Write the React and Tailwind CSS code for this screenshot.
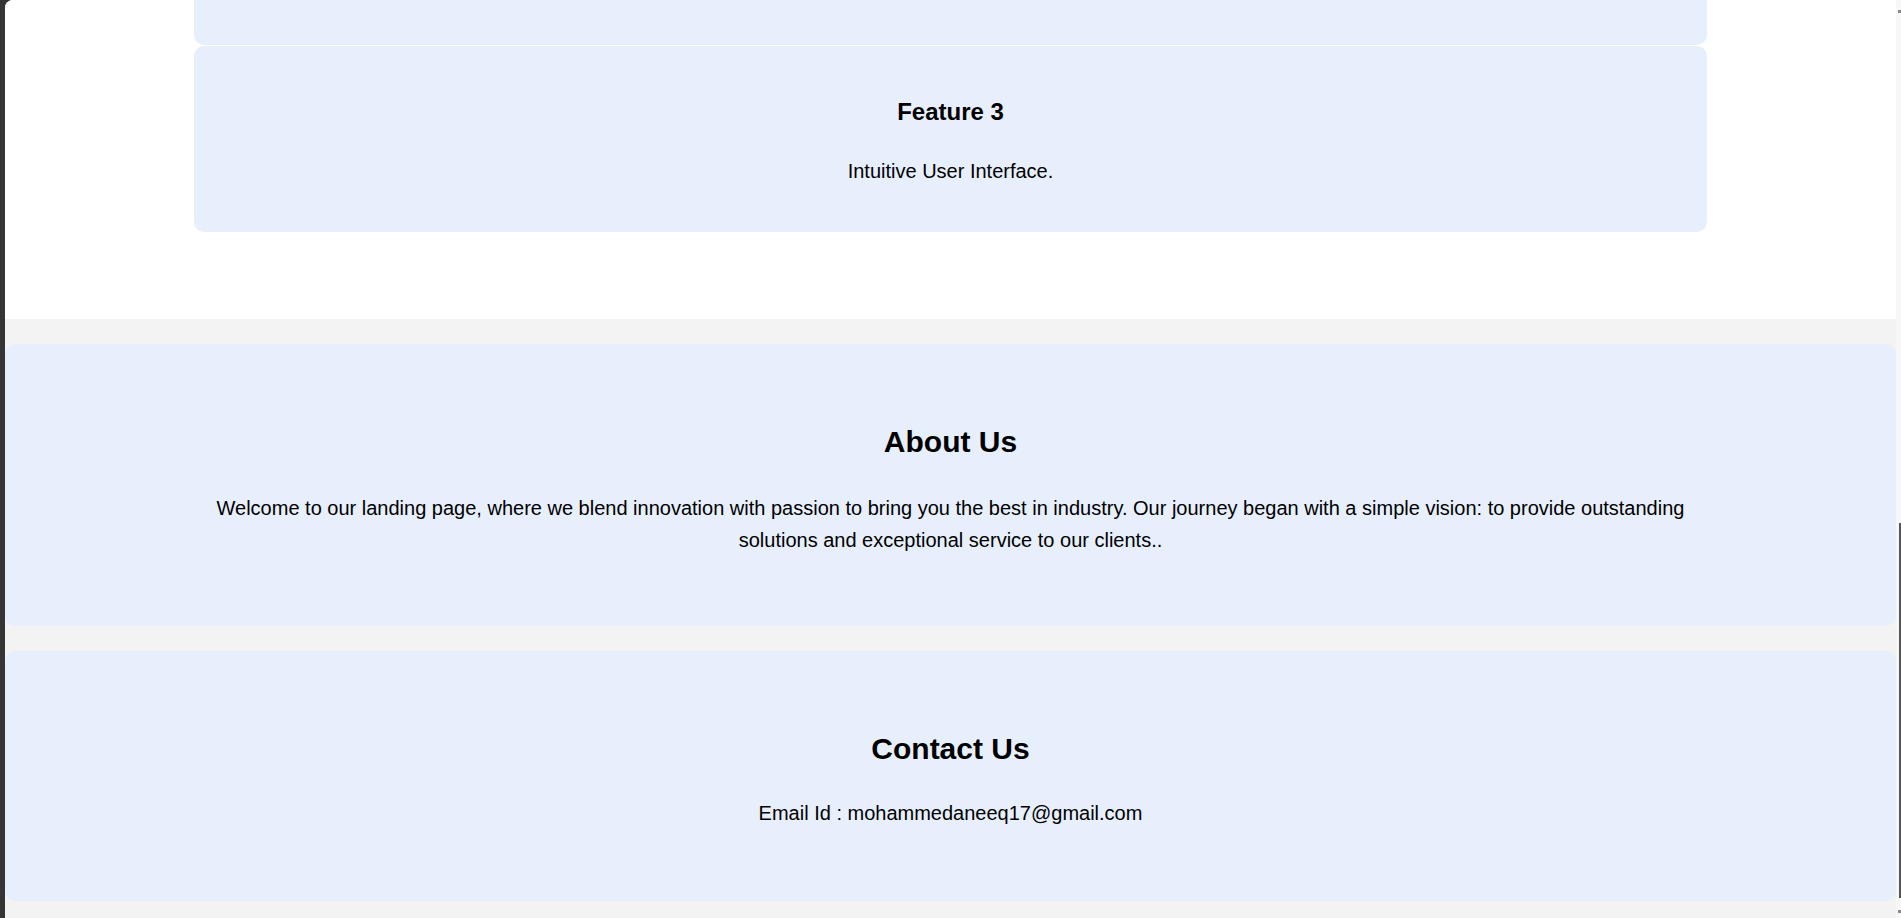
import React from "react";

const features = [
    { title: "Feature 3", text: "Intuitive User Interface." },
];

const App = () => {
    return (
        <div className="flex h-[918px] w-full overflow-hidden bg-[#353535] font-['Liberation_Sans',Arial,sans-serif] text-black">
            {/* left window edge */}
            <div className="w-[5px] shrink-0 bg-[#353535]"></div>

            {/* page */}
            <div className="flex-1 flex flex-col rounded-tl-[8px] bg-white overflow-hidden">
                {/* Features */}
                <section className="bg-white pb-[87px]">
                    <div className="mx-auto w-[80%]">
                        {/* tail of the card above */}
                        <div className="h-[45px] rounded-b-[10px] bg-[#e7effc]"></div>

                        {features.map((f) => (
                            <div key={f.title} className="mt-[1px] rounded-[10px] bg-[#e7effc] pt-[52px] pb-[49px] text-center">
                                <h3 className="text-[24px] leading-[28px] font-bold">{f.title}</h3>
                                <p className="mt-[33px] text-[20px] leading-[24px]">{f.text}</p>
                            </div>
                        ))}
                    </div>
                </section>

                {/* About + Contact */}
                <div className="flex-1 bg-[#f3f3f3] pt-[25px] flex flex-col gap-[25px]">
                    <section className="rounded-[10px] bg-[#e7effc] pt-[81px] pb-[70px] text-center">
                        <h2 className="text-[30px] leading-[34px] font-bold">About Us</h2>
                        <p className="mx-auto mt-[33px] w-[80%] text-[20px] leading-[32px]">
                            Welcome to our landing page, where we blend innovation with passion to bring you the best in industry. Our journey began with a simple vision: to provide outstanding solutions and exceptional service to our clients..
                        </p>
                    </section>

                    <section className="rounded-[10px] bg-[#e7effc] pt-[81px] pb-[72px] text-center">
                        <h2 className="text-[30px] leading-[34px] font-bold">Contact Us</h2>
                        <p className="mt-[31px] text-[20px] leading-[32px]">Email Id : mohammedaneeq17@gmail.com</p>
                    </section>
                </div>
            </div>

            {/* overlay scrollbar */}
            <div className="w-[5px] shrink-0 bg-[#f7f7f7] flex flex-col items-end">
                <div className="mt-[10px] h-[3px] w-[3px] bg-[#888]"></div>
                <div className="mt-[510px] h-[375px] w-[2px] bg-[#555]"></div>
                <div className="mt-[12px] h-[3px] w-[3px] bg-[#888]"></div>
            </div>
        </div>
    );
};

export default App;
